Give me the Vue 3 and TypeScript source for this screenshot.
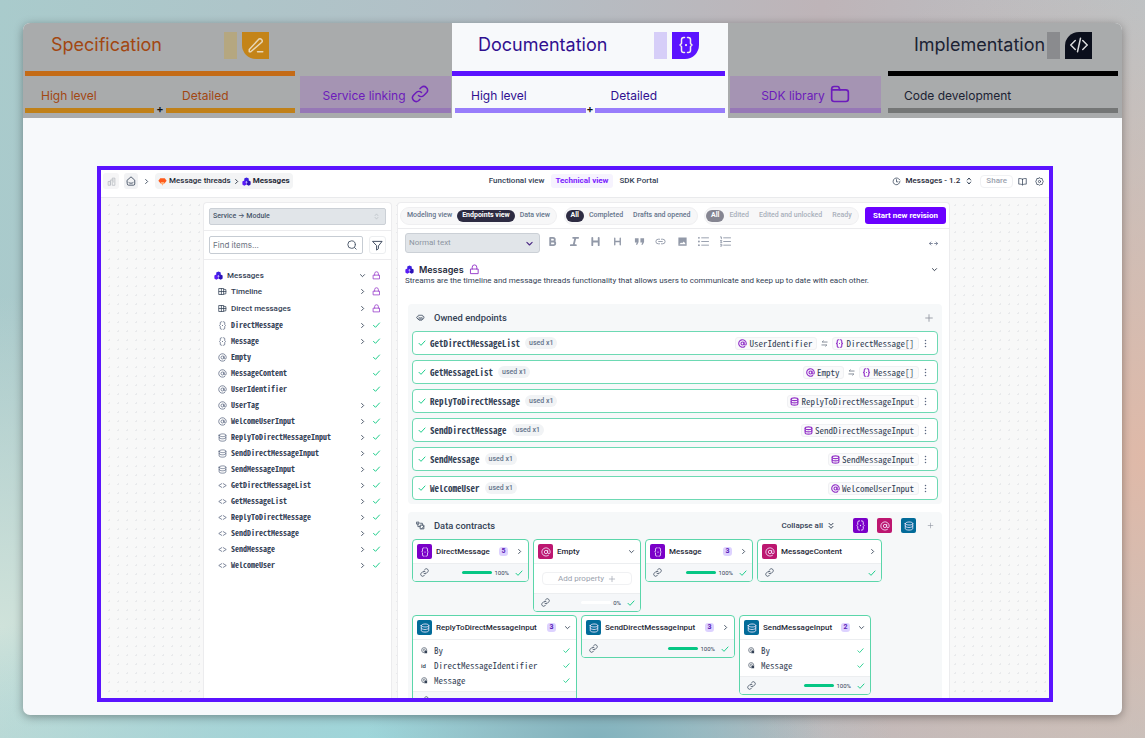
<script setup lang="ts">
import { h, type FunctionalComponent } from 'vue'

type Shape = string | { d: string; fill?: string; width?: number }

const glyphs: Record<string, Shape[]> = {
  pencil: ['M3 21h2l15-13a3 3 0 0 0-4-4L3 18z', 'M14 21h7'],
  braces: [
    'M10 2H9a3 3 0 0 0-3 3v5l-2 2 2 2v5a3 3 0 0 0 3 3h1',
    'M14 2h1a3 3 0 0 1 3 3v5l2 2-2 2v5a3 3 0 0 1-3 3h-1',
    { d: 'M12 12h.01', width: 3 },
  ],
  code: ['M7 6 1 12l6 6', 'M17 6l6 6-6 6', 'M14 3l-4 18'],
  chain: [
    'M10 14a5 5 0 0 0 7 0l4-4a5 5 0 0 0-7-7l-2 2',
    'M14 10a5 5 0 0 0-7 0l-4 4a5 5 0 0 0 7 7l2-2',
  ],
  folder: ['M2 6a3 3 0 0 1 3-3h4a2 2 0 0 1 2 2l1 2h7a3 3 0 0 1 3 3v8a3 3 0 0 1-3 3H5a3 3 0 0 1-3-3z', 'M2 7h10'],
  at: ['M16 12a4 4 0 1 1-8 0a4 4 0 1 1 8 0', 'M16 8v5a3 3 0 0 0 6 0v-1a10 10 0 1 0-4 8'],
  database: [
    'M3 6c0-5 18-5 18 0s-18 5-18 0z',
    'M3 6v12c0 5 18 5 18 0V6',
    'M3 12c0 5 18 5 18 0',
  ],
  endpoint: ['M10 7 2 12l8 5', 'M14 7l8 5-8 5'],
  table: ['M3 4h12v16H3z', 'M9 4v16', 'M3 12h12', 'M15 6l6 1v11l-6 1', 'M15 12h6'],
  lock: ['M4 11h16v10H4z', 'M7 11V7a5 5 0 0 1 10 0v4'],
  check: ['M3 13l6 6L21 6'],
  right: ['M9 5l7 7-7 7'],
  down: ['M5 9l7 7 7-7'],
  double: ['M6 4l6 6 6-6', 'M6 13l6 6 6-6'],
  updown: ['M7 9l5-6 5 6', 'M7 15l5 6 5-6'],
  search: ['M20 11a9 9 0 1 1-18 0a9 9 0 1 1 18 0', 'M18 18l4 4'],
  filter: ['M2 3h20l-8 10v6l-4 3v-9z'],
  building: ['M3 21V12h6v9z', 'M9 21V8h5', 'M14 21V3h7v18z', 'M17 8h1M17 13h1'],
  home: ['M3 10l9-8 9 8v9a3 3 0 0 1-3 3H6a3 3 0 0 1-3-3z', 'M7 16c2 2 8 2 10 0'],
  clock: ['M21 12a9 9 0 1 1-3-7l3 3', 'M12 7v6h4'],
  book: ['M12 6c-3-2-6-2-10-2v15c4 0 7 0 10 2c3-2 6-2 10-2V4c-4 0-7 0-10 2z', 'M12 6v15'],
  gear: ['M12 2l3 2 4 0 1 4 2 4-2 4-1 4-4 0-3 2-3-2-4 0-1-4-2-4 2-4 1-4 4 0z', 'M15 12a3 3 0 1 1-6 0a3 3 0 1 1 6 0'],
  swap: ['M21 7H4l4-4', 'M3 17h17l-4 4'],
  kebab: [{ d: 'M12 4h.01M12 12h.01M12 20h.01', width: 4 }],
  plus: ['M12 4v16M4 12h16'],
  expand: ['M9 12H2M5 8l-4 4 4 4', 'M15 12h7M19 8l4 4-4 4'],
  owned: ['M2 11l5-5h10l5 5-5 5H7z', 'M7 11c3 3 7 3 10 0', 'M4 15l4 4h8l4-4'],
  contracts: ['M2 3h6v5H2z', 'M5 8v7h6', 'M12 11h9v10h-9z', 'M12 6h5v5', 'M15 21l6-7'],
  bold: [{ d: 'M7 4h6a4 4 0 0 1 0 8H7zM7 12h7a4 4 0 0 1 0 8H7z', width: 4 }],
  italic: [{ d: 'M9 4h11M4 20h11M14 4l-4 16', width: 4 }],
  heading: [{ d: 'M5 4v16M19 4v16M5 12h14', width: 4 }],
  subheading: [{ d: 'M6 5v14M18 5v14M6 12h12', width: 3 }],
  quote: [
    { d: 'M2 5h8v8l-3 6H4l2-5H2z', fill: 'currentColor' },
    { d: 'M14 5h8v8l-3 6h-3l2-5h-4z', fill: 'currentColor' },
  ],
  link: ['M10 7H7a5 5 0 0 0 0 10h3', 'M14 7h3a5 5 0 0 1 0 10h-3', 'M8 12h8'],
  image: [{ d: 'M3 3h18v18H3zM5 18h14l-4-6-4 4-2-2z', fill: 'currentColor' }],
  bullets: ['M8 4h15M8 12h15M8 20h15', { d: 'M2 4h.01M2 12h.01M2 20h.01', width: 4 }],
  numbers: ['M8 4h15M8 12h15M8 20h15', 'M1 2h2v4M1 10h3l-3 4h3M1 18h3v4H1'],
  reference: [
    'M20 10a9 9 0 1 0-9 10',
    'M15 10a4 4 0 1 0-5 5',
    { d: 'M12 12h9v9h-9z', fill: 'currentColor' },
  ],
}

const Glyph: FunctionalComponent<{ name: string; stroke?: number }> = (props) =>
  h(
    'svg',
    {
      viewBox: '0 0 24 24',
      fill: 'none',
      stroke: 'currentColor',
      'stroke-width': props.stroke ?? 2,
      'stroke-linecap': 'round',
      'stroke-linejoin': 'round',
      'aria-hidden': 'true',
    },
    glyphs[props.name].map((s) =>
      typeof s === 'string'
        ? h('path', { d: s })
        : h('path', s.fill ? { d: s.d, fill: s.fill, 'fill-rule': 'evenodd', stroke: 'none' } : { d: s.d, 'stroke-width': s.width }),
    ),
  )
Glyph.props = ['name', 'stroke']

const Cluster: FunctionalComponent = () =>
  h('svg', { viewBox: '0 0 24 24', 'aria-hidden': 'true' }, [
    h('path', { d: 'M12 1l6 3v7l-6 3-6-3V4z', fill: '#3b1fe0' }),
    h('path', { d: 'M6 9l6 3v8l-6 3-5-3v-8z', fill: '#5a1cf5' }),
    h('path', { d: 'M18 9l5 3v8l-5 3-6-3v-8z', fill: '#2b12b8' }),
    h('path', { d: 'M12 10l3 4-3 4-3-4z', fill: '#b9a6ff' }),
  ])

const tree = [
  { name: 'DirectMessage', icon: 'braces', open: true },
  { name: 'Message', icon: 'braces', open: true },
  { name: 'Empty', icon: 'at', open: false },
  { name: 'MessageContent', icon: 'at', open: false },
  { name: 'UserIdentifier', icon: 'at', open: false },
  { name: 'UserTag', icon: 'at', open: true },
  { name: 'WelcomeUserInput', icon: 'at', open: true },
  { name: 'ReplyToDirectMessageInput', icon: 'database', open: true },
  { name: 'SendDirectMessageInput', icon: 'database', open: true },
  { name: 'SendMessageInput', icon: 'database', open: true },
  { name: 'GetDirectMessageList', icon: 'endpoint', open: true },
  { name: 'GetMessageList', icon: 'endpoint', open: true },
  { name: 'ReplyToDirectMessage', icon: 'endpoint', open: true },
  { name: 'SendDirectMessage', icon: 'endpoint', open: true },
  { name: 'SendMessage', icon: 'endpoint', open: true },
  { name: 'WelcomeUser', icon: 'endpoint', open: true },
]

const views = [
  { tone: 'dark', active: 1, items: ['Modeling view', 'Endpoints view', 'Data view'] },
  { tone: 'dark', active: 0, items: ['All', 'Completed', 'Drafts and opened'] },
  { tone: 'faded', active: 0, items: ['All', 'Edited', 'Edited and unlocked', 'Ready'] },
]

const tools = [
  ['bold', 'Bold'],
  ['italic', 'Italic'],
  ['heading', 'Heading'],
  ['subheading', 'Subheading'],
  ['quote', 'Quote'],
  ['link', 'Link'],
  ['image', 'Image'],
  ['bullets', 'Bulleted list'],
  ['numbers', 'Numbered list'],
]

const endpoints = [
  { name: 'GetDirectMessageList', input: { icon: 'at', name: 'UserIdentifier' }, output: { icon: 'braces', name: 'DirectMessage[]' } },
  { name: 'GetMessageList', input: { icon: 'at', name: 'Empty' }, output: { icon: 'braces', name: 'Message[]' } },
  { name: 'ReplyToDirectMessage', input: null, output: { icon: 'database', name: 'ReplyToDirectMessageInput' } },
  { name: 'SendDirectMessage', input: null, output: { icon: 'database', name: 'SendDirectMessageInput' } },
  { name: 'SendMessage', input: null, output: { icon: 'database', name: 'SendMessageInput' } },
  { name: 'WelcomeUser', input: null, output: { icon: 'at', name: 'WelcomeUserInput' } },
]

interface Card {
  name: string
  icon: string
  width: number
  count?: number
  open?: boolean
  percent?: number
  rows?: { name: string; type: 'reference' | 'id' }[]
}

const cards: Card[] = [
  { name: 'DirectMessage', icon: 'braces', width: 117, count: 5, percent: 100 },
  { name: 'Empty', icon: 'at', width: 108, open: true, percent: 0 },
  { name: 'Message', icon: 'braces', width: 108, count: 3, percent: 100 },
  { name: 'MessageContent', icon: 'at', width: 125 },
  {
    name: 'ReplyToDirectMessageInput', icon: 'database', width: 165, count: 3, open: true,
    rows: [{ name: 'By', type: 'reference' }, { name: 'DirectMessageIdentifier', type: 'id' }, { name: 'Message', type: 'reference' }],
  },
  { name: 'SendDirectMessageInput', icon: 'database', width: 154, count: 3, percent: 100 },
  {
    name: 'SendMessageInput', icon: 'database', width: 132, count: 2, open: true, percent: 100,
    rows: [{ name: 'By', type: 'reference' }, { name: 'Message', type: 'reference' }],
  },
]
</script>

<template>
  <div class="page">
    <main class="board">
      <header class="stages">
        <div class="group group-left">
          <section class="stage spec">
            <div class="stage-title">
              <h2>Specification</h2>
              <span class="swatch"></span>
              <span class="badge-icon corner-bl"><Glyph name="pencil" class="i18" /></span>
            </div>
            <div class="bar"></div>
            <div class="levels">
              <div class="level">High level</div>
              <span class="joint">+</span>
              <div class="level">Detailed</div>
            </div>
          </section>
          <div class="bridge">Service linking <Glyph name="chain" class="i18" /></div>
        </div>
        <div class="group group-mid">
          <section class="stage docs">
            <div class="stage-title">
              <h2>Documentation</h2>
              <span class="swatch"></span>
              <span class="badge-icon corner-br"><Glyph name="braces" class="i18" /></span>
            </div>
            <div class="bar"></div>
            <div class="levels">
              <div class="level">High level</div>
              <span class="joint">+</span>
              <div class="level">Detailed</div>
            </div>
          </section>
        </div>
        <div class="group group-right">
          <div class="bridge">SDK library <Glyph name="folder" class="i20" /></div>
          <section class="stage impl">
            <div class="stage-title">
              <h2>Implementation</h2>
              <span class="swatch"></span>
              <span class="badge-icon corner-tl"><Glyph name="code" class="i18" /></span>
            </div>
            <div class="bar"></div>
            <div class="levels single">
              <div class="level">Code development</div>
            </div>
          </section>
        </div>
      </header>

      <section class="frame">
        <nav class="topbar">
          <div class="crumbs">
            <button class="tile" aria-label="Organisation"><Glyph name="building" class="i9 pale" /></button>
            <button class="tile home" aria-label="Home"><Glyph name="home" class="i10" /></button>
            <Glyph name="right" :stroke="3" class="i7" />
            <div class="trail">
              <svg class="i9" viewBox="0 0 24 24" aria-hidden="true">
                <path d="M6 3h12l5 7-6 7H7l-6-7z" fill="#ff5a1a" />
                <path d="M7 13h10l-5 10z" fill="#ffab73" />
              </svg>
              <a href="#threads">Message threads</a>
              <Glyph name="right" :stroke="3" class="i7" />
              <Cluster class="i9" />
              <a href="#messages" class="strong">Messages</a>
            </div>
          </div>
          <div class="tabs">
            <a href="#functional">Functional view</a>
            <a href="#technical" class="on">Technical view</a>
            <a href="#portal">SDK Portal</a>
          </div>
          <div class="actions">
            <Glyph name="clock" class="i9" />
            <span class="version">Messages - 1.2</span>
            <Glyph name="updown" :stroke="3" class="i8" />
            <button class="share">Share</button>
            <button class="plain" aria-label="Docs"><Glyph name="book" class="i9" /></button>
            <button class="plain settings" aria-label="Settings"><Glyph name="gear" class="i9" /></button>
          </div>
        </nav>

        <div class="canvas">
          <aside class="side">
            <div class="side-block">
              <label class="pick scope">
                <select aria-label="Scope"><option>Service → Module</option></select>
                <Glyph name="updown" class="i7 pale" />
              </label>
            </div>
            <div class="side-block search-row">
              <label class="search">
                <input type="text" placeholder="Find items..." aria-label="Find items" />
                <Glyph name="search" class="i10" />
              </label>
              <button class="filter" aria-label="Filter"><Glyph name="filter" class="i11" /></button>
            </div>
            <ul class="tree">
              <li class="root"><Cluster class="i9" /><span>Messages</span><Glyph name="down" :stroke="3" class="i7" /><Glyph name="lock" class="i9 violet" /></li>
              <li class="module"><Glyph name="table" class="i9" /><span>Timeline</span><Glyph name="right" :stroke="3" class="i7" /><Glyph name="lock" class="i9 violet" /></li>
              <li class="module"><Glyph name="table" class="i9" /><span>Direct messages</span><Glyph name="right" :stroke="3" class="i7" /><Glyph name="lock" class="i9 violet" /></li>
              <li v-for="item in tree" :key="item.name" class="leaf">
                <Glyph :name="item.icon" class="i9 slate" />
                <span class="mono">{{ item.name }}</span>
                <Glyph v-if="item.open" name="right" :stroke="3" class="i7" />
                <Glyph name="check" :stroke="3" class="i8 green" />
              </li>
            </ul>
          </aside>

          <article class="main">
            <div class="filters">
              <div v-for="(group, g) in views" :key="g" class="segment" :class="group.tone">
                <button v-for="(item, i) in group.items" :key="item" :class="{ on: i === group.active }">{{ item }}</button>
              </div>
              <button class="primary">Start new revision</button>
            </div>
            <div class="editor">
              <label class="pick style-pick">
                <select aria-label="Text style"><option>Normal text</option></select>
                <Glyph name="down" :stroke="3" class="i9 indigo" />
              </label>
              <div class="tools">
                <button v-for="[icon, label] in tools" :key="icon" :aria-label="label"><Glyph :name="icon" class="i11" /></button>
              </div>
              <Glyph name="expand" class="i9 slate push" />
            </div>
            <div class="intro">
              <div class="intro-title">
                <Cluster class="i9" />
                <h1>Messages</h1>
                <Glyph name="lock" class="i11 violet" />
                <Glyph name="down" :stroke="3" class="i7 push" />
              </div>
              <p>Streams are the timeline and message threads functionality that allows users to communicate and keep up to date with each other.</p>
            </div>

            <section class="panel">
              <div class="panel-head">
                <Glyph name="owned" class="i9" />
                <h3>Owned endpoints</h3>
                <button class="plain push" aria-label="Add endpoint"><Glyph name="plus" class="i10 grey" /></button>
              </div>
              <ul class="endpoints">
                <li v-for="row in endpoints" :key="row.name">
                  <Glyph name="check" :stroke="3" class="i8 green" />
                  <span class="mono name">{{ row.name }}</span>
                  <span class="used">used x1</span>
                  <span class="types">
                    <template v-if="row.input">
                      <span class="chip mono"><Glyph :name="row.input.icon" :stroke="3" class="i9 violet" />{{ row.input.name }}</span>
                      <Glyph name="swap" class="i7" />
                    </template>
                    <span class="chip mono"><Glyph :name="row.output.icon" :stroke="3" class="i9 violet" />{{ row.output.name }}</span>
                  </span>
                  <button class="plain" aria-label="More"><Glyph name="kebab" class="i9 slate" /></button>
                </li>
              </ul>
            </section>

            <section class="panel contracts">
              <div class="panel-head">
                <Glyph name="contracts" class="i9" />
                <h3>Data contracts</h3>
                <button class="collapse push">Collapse all <Glyph name="double" :stroke="3" class="i8" /></button>
                <button class="kind braces" aria-label="Add object"><Glyph name="braces" class="i11" /></button>
                <button class="kind at" aria-label="Add scalar"><Glyph name="at" class="i10" /></button>
                <button class="kind database" aria-label="Add input"><Glyph name="database" class="i10" /></button>
                <button class="plain more" aria-label="Add contract"><Glyph name="plus" class="i7 grey" /></button>
              </div>
              <div class="cards">
                <div v-for="card in cards" :key="card.name" class="card" :style="{ width: card.width + 'px' }">
                  <div class="card-head">
                    <span class="kind" :class="card.icon"><Glyph :name="card.icon" class="i10" /></span>
                    <h4>{{ card.name }}</h4>
                    <span v-if="card.count" class="count">{{ card.count }}</span>
                    <Glyph :name="card.open ? 'down' : 'right'" :stroke="3" class="i7" />
                  </div>
                  <div v-if="card.percent === 0" class="card-add">
                    <button>Add property <Glyph name="plus" class="i8" /></button>
                  </div>
                  <ul v-if="card.rows" class="fields">
                    <li v-for="field in card.rows" :key="field.name">
                      <Glyph v-if="field.type === 'reference'" name="reference" class="i7" />
                      <span v-else class="id">id</span>
                      <span class="mono">{{ field.name }}</span>
                      <Glyph name="check" :stroke="3" class="i7 green" />
                    </li>
                  </ul>
                  <div class="card-foot">
                    <Glyph name="chain" class="i9" />
                    <span v-if="card.percent !== undefined" class="meter"><i :style="{ width: card.percent + '%' }"></i></span>
                    <span v-if="card.percent !== undefined" class="percent">{{ card.percent }}%</span>
                    <Glyph name="check" :stroke="3" class="i8 green" />
                  </div>
                </div>
              </div>
            </section>
          </article>
        </div>
      </section>
    </main>
  </div>
</template>

<style>
html,
body {
  margin: 0;
}
</style>

<style scoped>
* {
  box-sizing: border-box;
}
.page {
  height: 100vh;
  padding: 23px;
  overflow: hidden;
  display: flex;
  font-family: Inter, 'Liberation Sans', sans-serif;
  font-size: 8px;
  line-height: 1;
  color: #334155;
  background:
    radial-gradient(ellipse 20% 14% at 52% 100%, #82b2bd 0%, #82b2bd00 100%),
    radial-gradient(ellipse 45% 22% at 33% 100%, #9ed6da 0%, #9ed6da00 100%),
    radial-gradient(ellipse 35% 45% at 0% 85%, #cfe2da 0%, #cfe2da00 100%),
    radial-gradient(ellipse 40% 70% at 100% 62%, #dfb9a8 0%, #dfb9a800 100%),
    linear-gradient(95deg, #a9cbcc 0%, #b3bfc6 40%, #beb4b8 68%, #b9c5c9 100%);
}
h1,
h2,
h3,
h4,
p,
ul {
  margin: 0;
  padding: 0;
  font-weight: 500;
  list-style: none;
}
button,
select,
input {
  font: inherit;
  color: inherit;
  border: 0;
  margin: 0;
  padding: 0;
  background: none;
}
a {
  color: inherit;
  text-decoration: none;
}
svg {
  flex: none;
  display: block;
}
.i7 { width: 7px; height: 7px; }
.i8 { width: 8px; height: 8px; }
.i9 { width: 9px; height: 9px; }
.i10 { width: 10px; height: 10px; }
.i11 { width: 11px; height: 11px; }
.i18 { width: 18px; height: 18px; }
.i20 { width: 20px; height: 20px; }
.pale { color: #b4b8bf; }
.grey { color: #8b919c; }
.slate { color: #5b6780; }
.violet { color: #9333c8; }
.green { color: #1fce8c; }
.indigo { color: #4c2a85; }
.push { margin-left: auto; }
.mono {
  font-family: 'Noto Sans Mono CJK SC', 'Liberation Mono', monospace;
  font-weight: 500;
}
.plain { display: flex; }

.board {
  flex: 1;
  min-width: 0;
  display: flex;
  flex-direction: column;
  border-radius: 7px;
  overflow: hidden;
  background: #f7f9fb;
  box-shadow: 0 2px 10px rgba(0, 0, 0, 0.35);
}

/* Stage header */
.stages {
  display: grid;
  grid-template-columns: 429fr 276fr 394fr;
}
.group {
  display: grid;
  padding-bottom: 5px;
  background: #a9abac;
}
.group-left {
  grid-template-columns: 270fr 151fr;
  gap: 5px;
  padding-left: 2px;
  padding-right: 1px;
}
.group-mid {
  padding-right: 3px;
  background: #f7f9fb;
}
.group-right {
  grid-template-columns: 151fr 230fr;
  gap: 7px;
  padding-left: 2px;
  padding-right: 4px;
}
.stage { min-width: 0; }
.stage-title {
  height: 48px;
  padding: 0 26px 4px;
  display: flex;
  align-items: center;
  gap: 5px;
}
.stage-title h2 {
  flex: 1;
  min-width: 0;
  font-size: 18px;
  font-weight: 400;
  white-space: nowrap;
}
.swatch {
  flex: none;
  width: 13px;
  height: 27px;
}
.badge-icon {
  flex: none;
  width: 27px;
  height: 27px;
  display: grid;
  place-items: center;
  color: #f4f0ea;
}
.corner-bl { border-bottom-left-radius: 14px; }
.corner-br { border-bottom-right-radius: 14px; }
.corner-tl { border-top-left-radius: 14px; }
.bar { height: 5px; }
.levels {
  display: grid;
  grid-template-columns: 1fr 12px 1fr;
}
.levels.single { grid-template-columns: 1fr; }
.docs .levels {
  grid-template-columns: 1fr 9px 1fr;
  padding-left: 3px;
}
.level,
.bridge {
  height: 37px;
  display: flex;
  align-items: center;
  padding: 8px 16px 0;
  font-size: 12px;
  border-bottom: 5px solid;
}
.joint {
  align-self: end;
  text-align: center;
  font-size: 11px;
  line-height: 7px;
  font-weight: 600;
  color: #111;
}
.spec { color: #a24712; }
.spec .swatch { background: #b5a780; }
.spec .badge-icon { background: #c48418; color: #e8d6b5; }
.spec .bar { background: #c46b16; }
.spec .level { border-color: #c08018; }
.docs { color: #301090; }
.docs .swatch { background: #d6cef8; }
.docs .badge-icon { background: #5b13ff; }
.docs .bar { background: #5b13ff; }
.docs .level { border-color: #987dfb; }
.impl { color: #1b2233; }
.impl .swatch { background: #8a8b8e; }
.impl .badge-icon { background: #0b0f1c; color: #d9dadb; }
.impl .bar { background: #000; }
.impl .level { border-color: #747676; }
.bridge {
  align-self: end;
  justify-content: center;
  gap: 5px;
  color: #6c1bbb;
  background: #a594b3;
  border-color: #9677b6;
}
.bridge svg { margin-bottom: 4px; }

/* Product window */
.frame {
  flex: 1;
  min-height: 0;
  margin: 48px 69px 13px 74px;
  border: 4px solid #5b13ff;
  background: #fff;
  display: flex;
  flex-direction: column;
  overflow: hidden;
  font-family: Roboto, Inter, sans-serif;
}
.topbar {
  height: 28px;
  flex: none;
  padding: 0 5px 5px 2px;
  display: grid;
  grid-template-columns: 1fr auto 1fr;
  align-items: center;
  border-bottom: 1px solid #e9eaec;
  font-weight: 500;
}
.crumbs,
.trail,
.tabs,
.actions {
  display: flex;
  align-items: center;
}
.crumbs { gap: 5px; }
.tile {
  width: 16px;
  height: 16px;
  display: grid;
  place-items: center;
  border-radius: 3px;
  background: #f5f5f6;
}
.tile.home { width: 14px; background: #f1f2f4; }
.trail {
  height: 16px;
  padding: 0 3px;
  gap: 2px;
  border-radius: 4px;
  background: #f3f4f5;
  color: #1f2937;
}
.strong { font-weight: 700; }
.tabs { gap: 7px; }
.tabs .on {
  padding: 3px 4px;
  border-radius: 3px;
  background: #f6f3fe;
  color: #7a1bff;
  font-weight: 700;
}
.actions {
  justify-content: flex-end;
  gap: 5px;
}
.version { color: #1f2937; }
.share {
  height: 13px;
  padding: 0 5px;
  margin-left: 2px;
  border: 1px solid #f0f1f3;
  border-radius: 4px;
  color: #9aa1ad;
}
.settings { margin-left: 3px; }

.canvas {
  flex: 1;
  min-height: 0;
  padding: 4px 99px 0 102px;
  display: grid;
  grid-template-columns: 189fr 553fr;
  gap: 5px;
  background: #f8f8f8 radial-gradient(circle, #e9eaec 1px, transparent 1px) 4px 3px / 9px 9px;
}
.side,
.main {
  min-width: 0;
  background: #fff;
  border: 1px solid #ececee;
  border-bottom: 0;
  border-radius: 4px 4px 0 0;
  overflow: hidden;
}

/* Side panel */
.side-block {
  padding: 5px;
  border-bottom: 1px solid #ececee;
}
.pick {
  display: flex;
  align-items: center;
  background: #e1e5e9;
  border: 1px solid #cbd0d6;
  border-radius: 2px;
}
.pick select {
  flex: 1;
  min-width: 0;
  padding-left: 3px;
  appearance: none;
  color: #475569;
}
.pick svg { margin-right: 5px; }
.scope {
  height: 17px;
  font-size: 7px;
  font-weight: 500;
}
.search-row {
  display: flex;
  gap: 6px;
}
.search {
  flex: 1;
  height: 18px;
  display: flex;
  align-items: center;
  padding: 0 5px 0 3px;
  border: 1px solid #c6ccd3;
  border-radius: 2px;
}
.search input {
  flex: 1;
  min-width: 0;
  font-family: Inter, sans-serif;
  outline: 0;
}
.search input::placeholder { color: #6b7280; }
.filter {
  width: 17px;
  height: 18px;
  display: grid;
  place-items: center;
  border: 1px solid #eceef0;
  border-radius: 3px;
}
.tree { padding: 8px 10px; }
.tree li {
  height: 16px;
  display: flex;
  align-items: center;
  gap: 4px;
  padding-left: 4px;
}
.tree li span {
  flex: 1;
  white-space: nowrap;
}
.tree li.root {
  height: 15px;
  padding-left: 0;
  font-weight: 500;
}
.tree li.module {
  height: 17px;
  font-weight: 500;
}
.tree .mono { font-weight: 600; }
.tree svg:last-child {
  width: 9px;
  margin-left: 2px;
}

/* Main panel */
.filters {
  height: 26px;
  padding: 0 3px 0 2px;
  display: flex;
  align-items: center;
  justify-content: space-between;
  border-bottom: 1px solid #ececee;
}
.segment {
  height: 18px;
  display: flex;
  align-items: center;
  padding: 0 1px;
  border: 1px solid #efeff1;
  border-radius: 9px;
  background: #f7f7f8;
  color: #64748b;
  font-size: 7px;
  font-weight: 500;
}
.segment button {
  height: 12px;
  padding: 0 5px;
  border-radius: 6px;
}
.segment .on {
  background: #2d2b42;
  color: #fff;
  font-weight: 700;
}
.segment.faded { color: #a9b0bb; }
.segment.faded .on { background: #858591; }
.primary {
  height: 17px;
  padding: 0 8px;
  border-radius: 3px;
  background: #6a00ff;
  color: #fff;
  font-weight: 700;
}
.editor {
  display: flex;
  align-items: center;
  padding: 4px 11px 4px 7px;
}
.style-pick {
  width: 135px;
  height: 20px;
  border-radius: 3px;
}
.style-pick select { color: #8d95a1; }
.tools {
  width: 191px;
  display: flex;
  justify-content: space-between;
  padding: 0 0 3px 7px;
  color: #9299a8;
}
.tools button { display: flex; }
.intro { padding: 7px 11px 0 7px; }
.intro-title {
  display: flex;
  align-items: center;
  gap: 5px;
  color: #1e293b;
}
.intro h1 {
  font-family: Inter, sans-serif;
  font-size: 9px;
  font-weight: 600;
}
.intro p {
  margin-top: 1px;
  font-weight: 400;
  line-height: 10px;
}
.panel {
  margin: 8px 7px 0 10px;
  padding: 0 4px 4px;
  border-radius: 4px;
  background: #f6f8f9;
}
.intro + .panel { margin-top: 18px; }
.panel-head {
  height: 27px;
  display: flex;
  align-items: center;
  gap: 9px;
  padding: 0 4px;
}
.endpoints {
  display: grid;
  gap: 5px;
}
.endpoints li {
  height: 24px;
  display: flex;
  align-items: center;
  padding: 0 7px 0 5px;
  border: 1px solid #6dd9b3;
  border-radius: 4px;
  background: #fff;
}
.name {
  margin: 0 5px 0 4px;
  font-size: 9px;
  font-weight: 700;
}
.used {
  height: 12px;
  padding: 0 4px;
  display: grid;
  place-items: center;
  border-radius: 6px;
  background: #f1f3f5;
  color: #64748b;
  font-size: 7px;
  font-weight: 500;
}
.types {
  flex: 1;
  display: flex;
  justify-content: flex-end;
  align-items: center;
  gap: 4px;
  margin-right: 2px;
}
.chip {
  height: 13px;
  padding: 0 4px 0 2px;
  display: flex;
  align-items: center;
  gap: 2px;
  border: 1px solid #f0f1f3;
  border-radius: 3px;
  background: #fafafb;
  font-size: 9px;
  font-weight: 400;
}

/* Contracts */
.contracts { min-height: 300px; }
.collapse {
  display: flex;
  align-items: center;
  gap: 4px;
  margin-right: 9px;
  font-weight: 500;
}
.kind {
  flex: none;
  width: 15px;
  height: 15px;
  display: grid;
  place-items: center;
  border-radius: 2px;
  color: #f3e8ff;
}
.kind.braces { background: #7a00c8; }
.kind.at { background: #bd1670; }
.kind.database { background: #026b99; }
.more { margin-left: 2px; }
.cards {
  display: flex;
  flex-wrap: wrap;
  align-items: flex-start;
  gap: 3px 4px;
}
.card {
  border: 1px solid #5bd6aa;
  border-radius: 4px;
  background: #fff;
  overflow: hidden;
}
.card-head {
  height: 23px;
  display: flex;
  align-items: center;
  gap: 4px;
  padding: 0 5px 0 4px;
}
.card-head h4 {
  flex: 1;
  white-space: nowrap;
  color: #1f2937;
}
.count {
  width: 9px;
  height: 9px;
  margin-right: 4px;
  display: grid;
  place-items: center;
  border-radius: 3px;
  background: #ddd2ff;
  color: #5b21b6;
  font-size: 7px;
  font-weight: 700;
}
.card-add {
  padding: 8px;
  border-top: 1px solid #eceef0;
}
.card-add button {
  width: 100%;
  height: 13px;
  display: flex;
  align-items: center;
  justify-content: center;
  gap: 4px;
  border: 1px solid #f0f1f3;
  border-radius: 4px;
  color: #9aa1ad;
}
.fields {
  padding: 3px 6px;
  border-top: 1px solid #eceef0;
}
.fields li {
  height: 15px;
  display: flex;
  align-items: center;
  gap: 6px;
  padding-left: 2px;
  font-size: 9px;
}
.fields .mono { flex: 1; }
.id {
  width: 7px;
  font-size: 6px;
}
.card-foot {
  height: 18px;
  display: flex;
  align-items: center;
  gap: 2px;
  padding: 0 5px 0 7px;
  border-top: 1px solid #eceef0;
  background: #f5f7f9;
}
.card-foot svg:first-child { margin-right: auto; }
.card-foot svg:last-child { margin-left: 4px; }
.meter {
  width: 30px;
  height: 3px;
  border-radius: 2px;
  background: #fff;
}
.meter i {
  display: block;
  height: 100%;
  border-radius: 2px;
  background: #06c684;
}
.percent { font-size: 6px; }
</style>
